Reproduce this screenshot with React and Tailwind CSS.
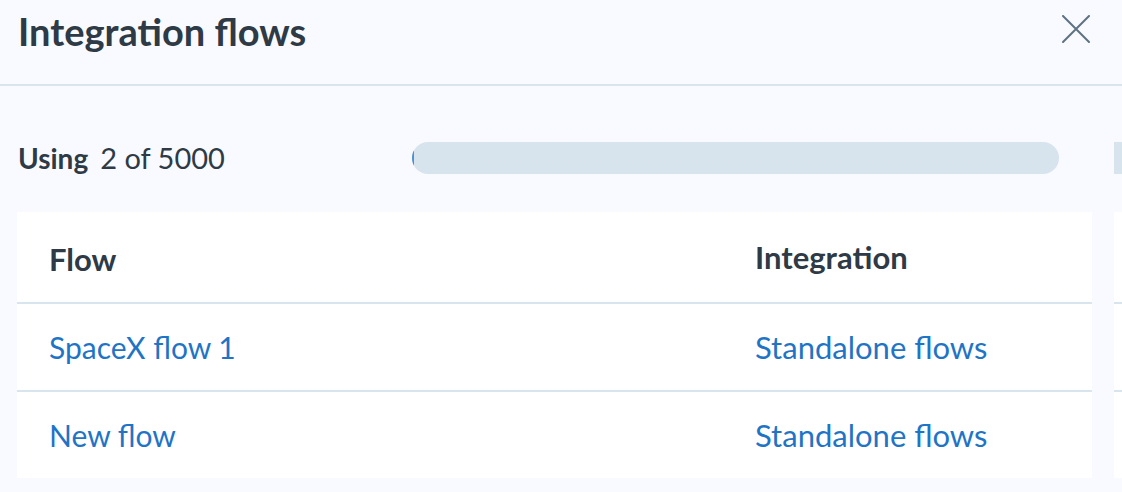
const flows = [
  { name: "SpaceX flow 1", integration: "Standalone flows" },
  { name: "New flow", integration: "Standalone flows" },
];

function CloseIcon() {
  return (
    <svg width="28" height="28" viewBox="0 0 28 28" className="text-[#5f7283]">
      <path d="M1 1L27 27M27 1L1 27" stroke="currentColor" strokeWidth="2" strokeLinecap="round" />
    </svg>
  );
}

export default function App() {
  return (
    <div
      className="w-[1122px] h-[492px] overflow-hidden bg-[#f8faff] text-[#2e3a46]"
      style={{ fontFamily: '"Lato", "Open Sans", sans-serif' }}
    >
      {/* Header */}
      <div className="h-[86px] flex items-start justify-between pl-[18px] pr-[32px] pt-[8px] border-b-2 border-[#d8e4ee]">
        <h1 className="text-[38px] font-bold leading-[46px]">Integration flows</h1>
        <div className="pt-[7px]">
          <CloseIcon />
        </div>
      </div>

      {/* Panels */}
      <div className="flex gap-[22px] pl-[17px] pt-[56px]">
        <div className="w-[1075px] shrink-0">
          {/* Usage */}
          <div className="flex items-center h-[32px]">
            <div className="w-[395px] text-[28px] pl-[1px] flex items-baseline gap-[12px]">
              <span className="font-bold">Using</span>
              <span className="text-[29px]">2 of 5000</span>
            </div>
            <div className="w-[647px] h-[32px] rounded-full bg-[#d7e4ed] overflow-hidden">
              <div className="h-full w-[2px] bg-[#4d8fd0]" />
            </div>
          </div>

          {/* Table */}
          <div className="mt-[38px] bg-white">
            <div className="flex h-[92px] items-center border-b-2 border-[#d8e4ee] font-bold text-[31px]">
              <div className="w-[738px] pl-[32px] pt-[4px]">Flow</div>
              <div>Integration</div>
            </div>
            {flows.map((f, i) => (
              <div
                key={f.name}
                className={`flex items-center text-[30px] text-[#1f74c6] ${
                  i === 0 ? "h-[88px] border-b-2 border-[#d8e4ee]" : "h-[86px]"
                }`}
              >
                <div className="w-[738px] pl-[32px]">{f.name}</div>
                <div className="text-[31px]">{f.integration}</div>
              </div>
            ))}
          </div>
        </div>

        {/* Next panel (cut off) */}
        <div className="w-[400px] shrink-0">
          <div className="h-[32px] bg-[#d7e4ed]" />
          <div className="mt-[38px] bg-white">
            <div className="h-[92px] border-b-2 border-[#d8e4ee]" />
            <div className="h-[88px] border-b-2 border-[#d8e4ee]" />
            <div className="h-[86px]" />
          </div>
        </div>
      </div>
    </div>
  );
}
